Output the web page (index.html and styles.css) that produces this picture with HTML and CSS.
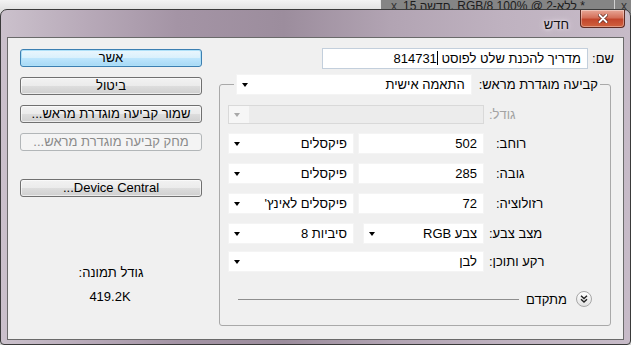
FILE: index.html
```html
<!DOCTYPE html>
<html lang="he">
<head>
  <meta charset="UTF-8" />
  <title>חדש</title>
  <link rel="stylesheet" href="styles.css">
</head>
<body>
  <div class="ps-bar">
    <div class="blank"></div>
    <div class="tab">
      <span class="tab-x">x</span>
      <span class="tab-name">15 השדח, RGB/8 100% @ 2-אלל *</span>
      <span class="tab-x tab-x-end">x</span>
    </div>
  </div>

  <div class="dialog">
    <div class="titlebar">
      <button class="close">
        <svg width="10" height="9" viewBox="0 0 10 9">
          <path d="M1.5 1 L8.5 8 M8.5 1 L1.5 8" stroke="#5a2016" stroke-width="3.4" stroke-linecap="round"/>
          <path d="M1.5 1 L8.5 8 M8.5 1 L1.5 8" stroke="#fff" stroke-width="2" stroke-linecap="round"/>
        </svg>
      </button>
      <span class="title">חדש</span>
    </div>

    <div class="client">
      <div class="main">
        <div class="name-row">
          <label class="name-label">שם:</label>
          <div class="textbox name-box">מדריך להכנת שלט לפוסט <span class="caret"></span>814731</div>
        </div>

        <fieldset class="group">
          <legend class="preset">
            <span class="preset-label">קביעה מוגדרת מראש:</span>
            <div class="combo preset-combo">התאמה אישית<span class="arrow"></span></div>
          </legend>

          <div class="row row-size">
            <span class="lbl disabled">גודל:</span>
            <div class="ctrls">
              <div class="combo combo-off wide"><span class="arrow-cell"><span class="arrow"></span></span></div>
            </div>
          </div>

          <div class="row">
            <span class="lbl lbl-in">רוחב:</span>
            <div class="ctrls">
              <div class="textbox num">502</div>
              <div class="combo">פיקסלים<span class="arrow"></span></div>
            </div>
          </div>

          <div class="row">
            <span class="lbl lbl-in">גובה:</span>
            <div class="ctrls">
              <div class="textbox num">285</div>
              <div class="combo">פיקסלים<span class="arrow"></span></div>
            </div>
          </div>

          <div class="row">
            <span class="lbl lbl-in">רזולוציה:</span>
            <div class="ctrls">
              <div class="textbox num">72</div>
              <div class="combo">פיקסלים לאינץ'<span class="arrow"></span></div>
            </div>
          </div>

          <div class="row">
            <span class="lbl">מצב צבע:</span>
            <div class="ctrls ctrls-mode">
              <div class="combo narrow">צבע RGB<span class="arrow"></span></div>
              <div class="combo">סיביות 8<span class="arrow"></span></div>
            </div>
          </div>

          <div class="row row-bg">
            <span class="lbl">רקע ותוכן:</span>
            <div class="ctrls">
              <div class="combo wide">לבן<span class="arrow"></span></div>
            </div>
          </div>

          <div class="advanced">
            <span class="round-btn">
              <svg width="8" height="8" viewBox="0 0 8 8">
                <polyline points="1,0.8 4,3.5 7,0.8" fill="none" stroke="#222" stroke-width="1.4"/>
                <polyline points="1,4.3 4,7 7,4.3" fill="none" stroke="#222" stroke-width="1.4"/>
              </svg>
            </span>
            <span class="adv-text">מתקדם</span>
            <span class="adv-line"></span>
          </div>
        </fieldset>
      </div>

      <div class="side">
        <button class="btn btn-default">אשר</button>
        <button class="btn">ביטול</button>
        <button class="btn">שמור קביעה מוגדרת מראש...</button>
        <button class="btn" disabled>מחק קביעה מוגדרת מראש...</button>
        <button class="btn btn-device">Device Central...</button>

        <div class="img-size">
          <p>גודל תמונה:</p>
          <p class="img-size-val">419.2K</p>
        </div>
      </div>
    </div>
  </div>
</body>
</html>
```

FILE: styles.css
```css
* {
  box-sizing: border-box;
}
body {
  margin: 0;
  width: 631px;
  height: 345px;
  overflow: hidden;
  position: relative;
  background: #d4d4d4;
  font-family: "Liberation Sans", Arial, sans-serif;
  font-size: 13px;
  color: #000;
}

/* photoshop tab strip behind the dialog */
.ps-bar {
  display: flex;
  height: 14px;
}
.ps-bar .blank {
  flex: 1;
  background: linear-gradient(#f3f3f3, #d9d9d9);
}
.ps-bar .tab {
  width: 251px;
  display: flex;
  gap: 6px;
  padding: 0 4px 0 10px;
  background: #858585;
  border-left: 1px solid #e6e6e6;
  color: #1c1c1c;
  font-size: 12px;
  line-height: 12px;
}
.tab-name {
  direction: ltr;
  unicode-bidi: bidi-override;
  white-space: nowrap;
}
.tab-x {
  color: #333;
}
.tab-x-end {
  margin-left: auto;
  padding-left: 6px;
  border-left: 1px solid #d0d0d0;
}

/* window */
.dialog {
  position: absolute;
  left: 0;
  top: 9px;
  width: 631px;
  height: 336px;
  display: flex;
  flex-direction: column;
  padding: 0 6px 4px;
  border: 1px solid #3a3a3a;
  border-radius: 7px 7px 4px 4px;
  background: linear-gradient(90deg, #cbc1cc 0%, #b7a9b8 14%, #a494a5 28%, #9c8d9d 45%, #b2a4b3 62%, #bfb2c0 80%, #c7bbc8 100%);
  direction: rtl;
}
.titlebar {
  height: 27px;
  display: flex;
  align-items: flex-start;
}
.close {
  width: 45px;
  height: 18px;
  margin: 0 -1px 0 0;
  padding: 0;
  display: flex;
  align-items: center;
  justify-content: center;
  border: 1px solid #5e2a22;
  border-top: none;
  border-radius: 0 0 4px 4px;
  background: linear-gradient(#e8a797 0%, #d4705a 45%, #c2462c 55%, #d0623f 100%);
  box-shadow: inset 0 0 0 1px rgba(255, 255, 255, 0.35);
}
.title {
  margin: 7px 11px 0 0;
  font-size: 13px;
  line-height: 16px;
  color: #101010;
  text-shadow: 0 0 6px #eee4ee, 0 0 3px #eee4ee;
}

.client {
  flex: 1;
  display: flex;
  gap: 17px;
  padding: 10px 9px 0 12px;
  background: #f0f0f0;
  border: 1px solid #6a6a6a;
}

/* right column */
.main {
  width: 395px;
}
.name-row {
  display: flex;
  align-items: center;
  gap: 6px;
  height: 21px;
}
.name-label {
  width: 20px;
  white-space: nowrap;
}
.textbox {
  height: 21px;
  line-height: 19px;
  padding: 0 6px;
  background: #fff;
  border: 1px solid #f4f4f4;
  white-space: nowrap;
}
.name-box {
  width: 266px;
  border-color: #c3cfdc;
}
.caret {
  display: inline-block;
  width: 1px;
  height: 14px;
  background: #000;
  vertical-align: -2px;
}

.group {
  width: 392px;
  margin: 5px 3px 0 0;
  padding: 0 10px 18px 8px;
  border: 1px solid #a9a9a9;
  border-radius: 3px;
}
.preset {
  display: flex;
  align-items: center;
  gap: 7px;
  padding: 0 2px;
}
.preset-label {
  white-space: nowrap;
}
.combo {
  position: relative;
  width: 126px;
  height: 21px;
  line-height: 19px;
  padding: 0 6px;
  background: #fff;
  border: 1px solid #f4f4f4;
  white-space: nowrap;
}
.preset-combo {
  width: 236px;
}
.arrow {
  position: absolute;
  left: 5px;
  top: 8px;
  border-left: 3.5px solid transparent;
  border-right: 3.5px solid transparent;
  border-top: 4px solid #000;
}

.row {
  display: flex;
  align-items: center;
  height: 21px;
  margin-top: 9px;
}
.row-size {
  height: 19px;
  margin-top: 10px;
}
.row-bg {
  margin-top: 7px;
}
.lbl {
  flex: 1;
  text-align: left;
  padding-left: 5px;
  white-space: nowrap;
}
.lbl-in {
  padding-left: 12px;
}
.disabled {
  color: #a3a3a3;
}
.ctrls {
  width: 256px;
  display: flex;
  gap: 4px;
}
.ctrls-mode {
  gap: 9px;
}
.num {
  width: 126px;
  text-align: right;
  direction: ltr;
}
.narrow {
  width: 121px;
}
.wide {
  width: 256px;
}
.combo-off {
  height: 19px;
  background: #ececec;
  border-color: #d9d9d9;
}
.arrow-cell {
  position: absolute;
  left: 0;
  top: 0;
  width: 20px;
  height: 17px;
  background: #f6f6f6;
}
.combo-off .arrow {
  top: 7px;
  border-top-color: #a8a8a8;
}

.advanced {
  display: flex;
  align-items: center;
  height: 16px;
  margin: 19px 8px 0 10px;
}
.round-btn {
  width: 16px;
  height: 16px;
  display: flex;
  align-items: center;
  justify-content: center;
  border: 1px solid #a7a7a7;
  border-radius: 50%;
  background: linear-gradient(#ffffff, #e2e2e2);
}
.adv-text {
  margin: 0 9px 0 7px;
  white-space: nowrap;
}
.adv-line {
  flex: 1;
  height: 1px;
  background: #8e8e8e;
}

/* left column */
.side {
  width: 182px;
  padding-top: 1px;
  display: flex;
  flex-direction: column;
}
.btn {
  height: 18px;
  margin: 0 0 10px;
  padding: 0;
  font-family: inherit;
  font-size: 13px;
  line-height: 16px;
  color: #000;
  border: 1px solid #707070;
  border-radius: 3px;
  background: linear-gradient(#f2f2f2 0%, #ebebeb 50%, #dddddd 51%, #cfcfcf 100%);
  box-shadow: inset 0 0 0 1px rgba(255, 255, 255, 0.6);
}
.btn-default {
  border-color: #3c7fb1;
  background: linear-gradient(#eaf6fd 0%, #d9f0fc 50%, #bee6fd 51%, #a7d9f5 100%);
  box-shadow: inset 0 0 0 1px #aee0f8;
}
.btn:disabled {
  color: #8a8a8a;
  border-color: #b2b6b8;
  background: #f4f4f4;
  box-shadow: none;
}
.btn-device {
  margin-top: 18px;
}
.img-size {
  margin-top: 58px;
  text-align: center;
}
.img-size p {
  margin: 0;
  line-height: 16px;
}
.img-size-val {
  margin-top: 8px !important;
  padding-right: 2px;
}
```
